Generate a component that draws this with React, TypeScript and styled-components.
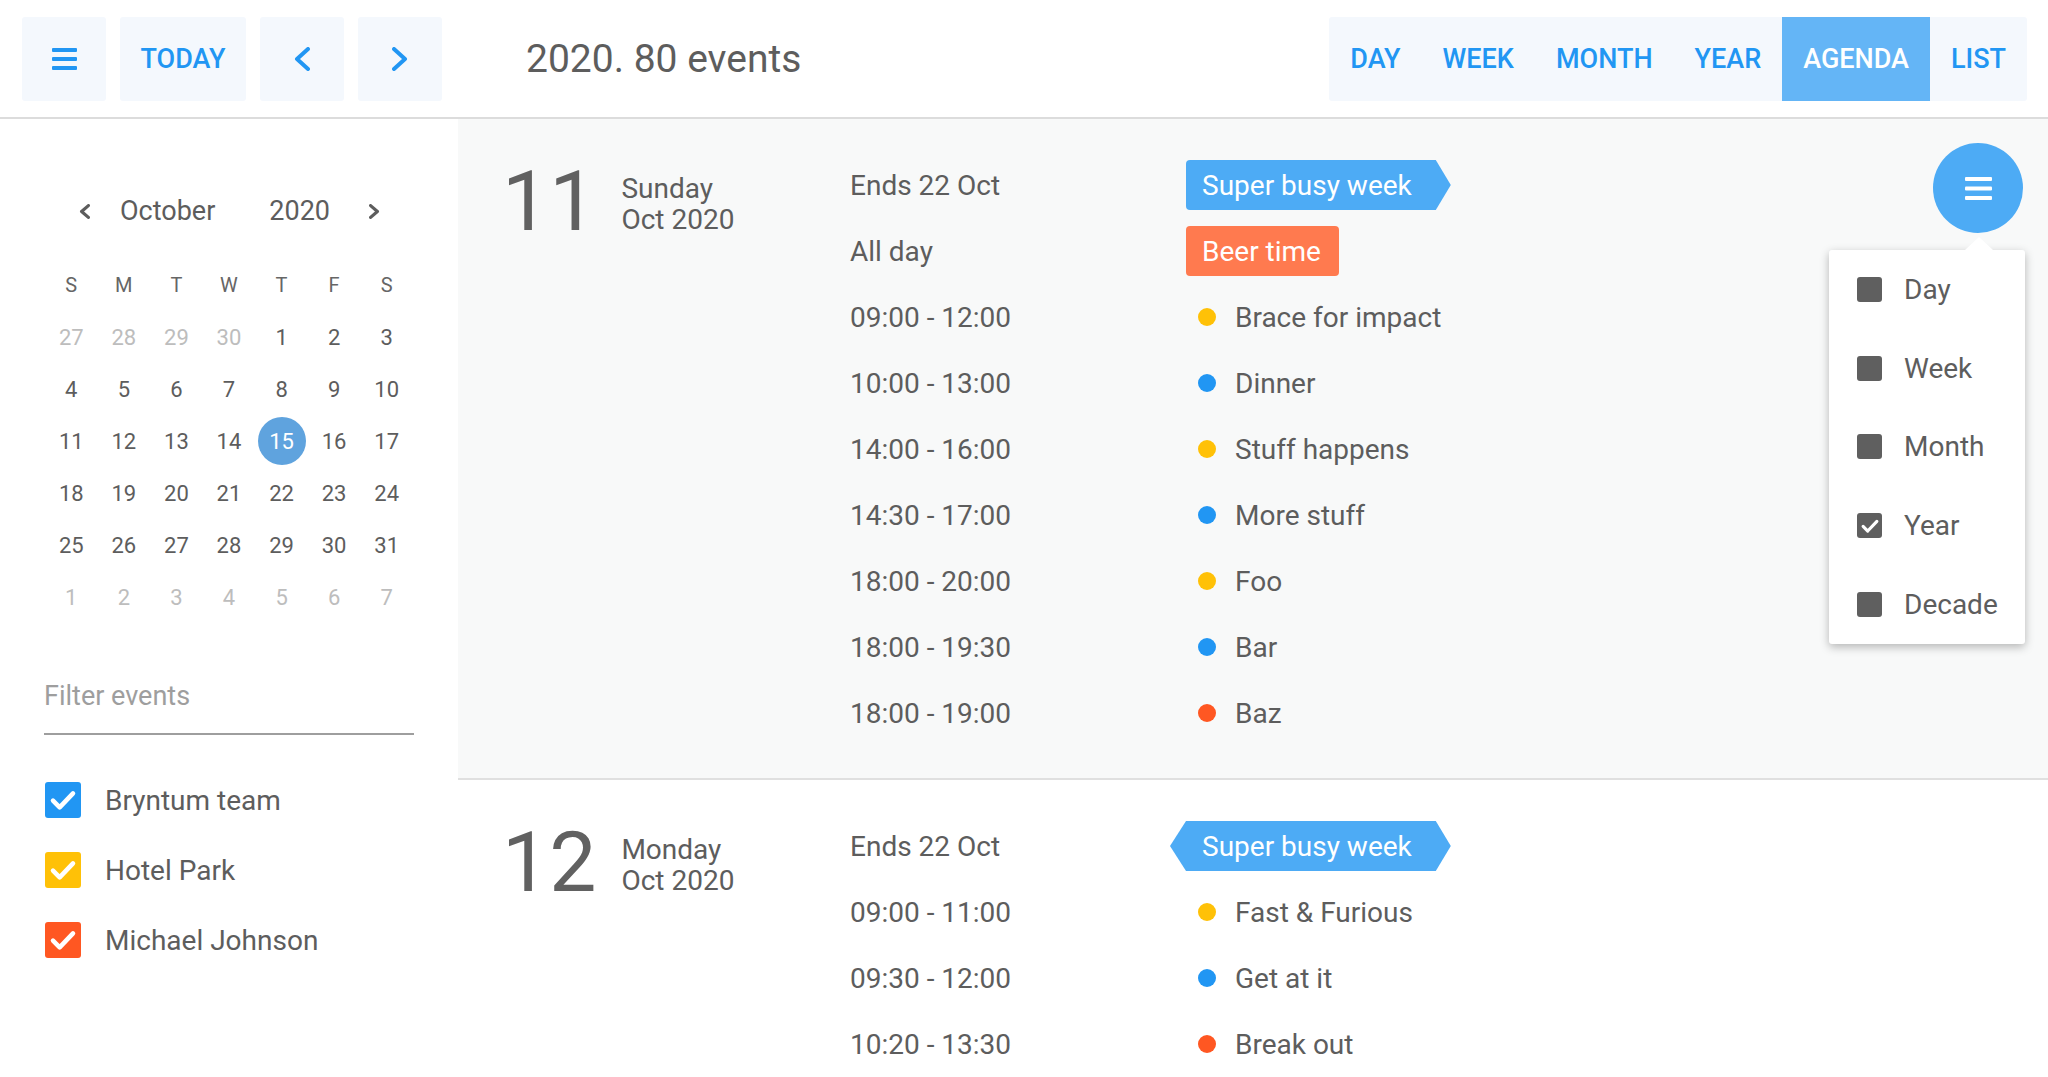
import React from "react";
import styled, { createGlobalStyle } from "styled-components";

const Global = createGlobalStyle`
  html, body { margin: 0; padding: 0; background: #ffffff; }
  body { font-family: Roboto, "Noto Sans", Arial, sans-serif; color: #5d5d5d; overflow: hidden; }
  * { box-sizing: border-box; }
`;

const BLUE = "#2196f3";
const YELLOW = "#ffc107";
const ORANGE = "#ff5722";
const TEXT = "#5d5d5d";

const Page = styled.div`
  width: 2048px;
  height: 1077px;
  display: flex;
  flex-direction: column;
  overflow: hidden;
`;

const Toolbar = styled.header`
  height: 119px;
  flex: none;
  display: flex;
  align-items: center;
  padding: 0 21px 0 22px;
  border-bottom: 2px solid #dcdcdc;
  background: #fff;
`;

const ToolButton = styled.button<{ $w?: number }>`
  height: 84px;
  min-width: ${(p) => p.$w ?? 84}px;
  padding: 0 19px;
  margin-right: 14px;
  border: none;
  border-radius: 3px;
  background: #f4f8fd;
  color: ${BLUE};
  font-family: Roboto, sans-serif;
  font-size: 27px;
  font-weight: 500;
  display: flex;
  align-items: center;
  justify-content: center;
`;

const Title = styled.h1`
  margin: 0 0 0 70px;
  font-size: 39px;
  font-weight: 400;
  color: ${TEXT};
  flex: 1;
  letter-spacing: 0;
`;

const ViewGroup = styled.div`
  display: flex;
  height: 84px;
  background: #f4f8fd;
  border-radius: 3px;
  overflow: hidden;
`;

const ViewButton = styled.button<{ $active?: boolean }>`
  height: 84px;
  padding: 0 21px;
  border: none;
  background: ${(p) => (p.$active ? "#64b5f6" : "transparent")};
  color: ${(p) => (p.$active ? "#fff" : BLUE)};
  font-family: Roboto, sans-serif;
  font-size: 27px;
  font-weight: 500;
`;

const Body = styled.div`
  flex: 1;
  display: flex;
  min-height: 0;
`;

const Sidebar = styled.aside`
  width: 458px;
  flex: none;
  background: #fff;
  padding-top: 66px;
`;

const CalHeader = styled.div`
  height: 52px;
  display: flex;
  align-items: center;
  padding-left: 72px;
  font-size: 27px;
  color: ${TEXT};
`;

const SmallChevron = styled.span`
  width: 24px;
  height: 24px;
  display: flex;
  align-items: center;
  justify-content: center;
`;

const MonthLabel = styled.span`
  margin-left: 24px;
`;

const YearLabel = styled.span`
  margin-left: 54px;
  margin-right: 32px;
`;

const CalGrid = styled.div`
  margin: 22px 0 0 45px;
  width: 368px;
  display: grid;
  grid-template-columns: repeat(7, 1fr);
  grid-auto-rows: 52px;
`;

const DayName = styled.div`
  display: flex;
  align-items: center;
  justify-content: center;
  font-size: 20px;
  color: #666;
`;

const DateCell = styled.div<{ $muted?: boolean; $today?: boolean }>`
  display: flex;
  align-items: center;
  justify-content: center;
  font-size: 22px;
  color: ${(p) => (p.$muted ? "#bdbdbd" : p.$today ? "#fff" : TEXT)};
  & > span {
    width: 48px;
    height: 48px;
    border-radius: 50%;
    display: flex;
    align-items: center;
    justify-content: center;
    background: ${(p) => (p.$today ? "#5fa3de" : "transparent")};
  }
`;

const FilterField = styled.div`
  margin: 55px 0 0 44px;
  width: 370px;
  padding-bottom: 19px;
  border-bottom: 2px solid #9e9e9e;
  font-size: 27px;
  line-height: 36px;
  color: #9e9e9e;
`;

const ResourceList = styled.div`
  margin: 30px 0 0 45px;
  display: flex;
  flex-direction: column;
`;

const ResourceRow = styled.label`
  height: 70px;
  display: flex;
  align-items: center;
  gap: 24px;
  font-size: 28px;
  color: ${TEXT};
`;

const ColorBox = styled.span<{ $color: string }>`
  width: 36px;
  height: 36px;
  border-radius: 3px;
  background: ${(p) => p.$color};
  display: flex;
  align-items: center;
  justify-content: center;
`;

const Agenda = styled.main`
  flex: 1;
  position: relative;
  overflow: hidden;
  background: #fff;
`;

const DaySection = styled.section<{ $shade?: boolean }>`
  display: flex;
  padding: 33px 0 32px;
  background: ${(p) => (p.$shade ? "#f8f9f9" : "#fff")};
  border-bottom: 2px solid #e0e0e0;
`;

const DateBlock = styled.div`
  width: 392px;
  flex: none;
  display: flex;
  align-items: flex-start;
  padding-left: 44px;
`;

const BigNumber = styled.div`
  font-size: 84px;
  line-height: 84px;
  margin-top: 8px;
  color: #616161;
  font-weight: 400;
`;

const DateText = styled.div`
  margin: 21px 0 0 25px;
  font-size: 28px;
  line-height: 31px;
  color: ${TEXT};
`;

const EventList = styled.div`
  flex: 1;
  display: flex;
  flex-direction: column;
`;

const EventRow = styled.div`
  height: 66px;
  display: grid;
  grid-template-columns: 336px 1fr;
  align-items: center;
  font-size: 28px;
  color: ${TEXT};
`;

const TimeText = styled.div``;

const EventCell = styled.div`
  display: flex;
  align-items: center;
`;

const Pill = styled.div<{ $color: string; $arrowRight?: boolean; $arrowLeft?: boolean }>`
  height: 50px;
  display: flex;
  align-items: center;
  background: ${(p) => p.$color};
  color: #fff;
  border-radius: 4px;
  padding: 0 ${(p) => (p.$arrowRight ? 39 : 18)}px 0 ${(p) => (p.$arrowLeft ? 32 : 16)}px;
  margin-left: ${(p) => (p.$arrowLeft ? -16 : 0)}px;
  clip-path: ${(p) =>
    p.$arrowRight && p.$arrowLeft
      ? "polygon(16px 0, calc(100% - 15px) 0, 100% 50%, calc(100% - 15px) 100%, 16px 100%, 0 50%)"
      : p.$arrowRight
      ? "polygon(0 0, calc(100% - 15px) 0, 100% 50%, calc(100% - 15px) 100%, 0 100%)"
      : "none"};
`;

const Dot = styled.span<{ $color: string }>`
  width: 18px;
  height: 18px;
  border-radius: 50%;
  background: ${(p) => p.$color};
  margin: 0 19px 0 12px;
  flex: none;
`;

const Fab = styled.button`
  position: absolute;
  top: 24px;
  right: 25px;
  width: 90px;
  height: 90px;
  border-radius: 50%;
  border: none;
  background: #4dabf5;
  display: flex;
  align-items: center;
  justify-content: center;
  z-index: 2;
`;

const Popup = styled.div`
  position: absolute;
  top: 131px;
  right: 23px;
  width: 196px;
  background: #fff;
  border-radius: 3px;
  box-shadow: 0 3px 10px rgba(0, 0, 0, 0.28);
  z-index: 3;
  &::before {
    content: "";
    position: absolute;
    top: -13px;
    right: 32px;
    width: 0;
    height: 0;
    border-left: 14px solid transparent;
    border-right: 14px solid transparent;
    border-bottom: 13px solid #fff;
  }
`;

const MenuItem = styled.div`
  height: 78.8px;
  display: flex;
  align-items: center;
  padding-left: 28px;
  gap: 22px;
  font-size: 28px;
  color: ${TEXT};
`;

const MenuBox = styled.span`
  width: 25px;
  height: 25px;
  border-radius: 3px;
  background: #5f5f5f;
  display: flex;
  align-items: center;
  justify-content: center;
`;

const Hamburger = ({ color, w, gap, bar }: { color: string; w: number; gap: number; bar: number }) => (
  <svg width={w} height={bar * 3 + gap * 2} viewBox={`0 0 ${w} ${bar * 3 + gap * 2}`}>
    {[0, 1, 2].map((i) => (
      <rect key={i} x={0} y={i * (bar + gap)} width={w} height={bar} rx={1} fill={color} />
    ))}
  </svg>
);

const Chevron = ({ dir, color, w, h, sw }: { dir: "l" | "r"; color: string; w: number; h: number; sw: number }) => {
  const pts = dir === "l" ? `${w - sw / 2},${sw / 2} ${sw / 2 + 1},${h / 2} ${w - sw / 2},${h - sw / 2}` : `${sw / 2},${sw / 2} ${w - sw / 2 - 1},${h / 2} ${sw / 2},${h - sw / 2}`;
  return (
    <svg width={w} height={h} viewBox={`0 0 ${w} ${h}`}>
      <polyline points={pts} fill="none" stroke={color} strokeWidth={sw} strokeLinecap="round" strokeLinejoin="round" />
    </svg>
  );
};

const Check = ({ size, sw }: { size: number; sw: number }) => (
  <svg width={size} height={size} viewBox="0 0 24 24">
    <polyline points="4.5,12.5 9.5,17.5 19.5,7" fill="none" stroke="#fff" strokeWidth={sw} strokeLinecap="round" strokeLinejoin="round" />
  </svg>
);

type Ev =
  | { time: string; kind: "pill"; name: string; color: string; right?: boolean; left?: boolean }
  | { time: string; kind: "dot"; name: string; color: string };

const day11: Ev[] = [
  { time: "Ends 22 Oct", kind: "pill", name: "Super busy week", color: "#4dabf5", right: true },
  { time: "All day", kind: "pill", name: "Beer time", color: "#ff7a4f" },
  { time: "09:00 - 12:00", kind: "dot", name: "Brace for impact", color: YELLOW },
  { time: "10:00 - 13:00", kind: "dot", name: "Dinner", color: BLUE },
  { time: "14:00 - 16:00", kind: "dot", name: "Stuff happens", color: YELLOW },
  { time: "14:30 - 17:00", kind: "dot", name: "More stuff", color: BLUE },
  { time: "18:00 - 20:00", kind: "dot", name: "Foo", color: YELLOW },
  { time: "18:00 - 19:30", kind: "dot", name: "Bar", color: BLUE },
  { time: "18:00 - 19:00", kind: "dot", name: "Baz", color: ORANGE },
];

const day12: Ev[] = [
  { time: "Ends 22 Oct", kind: "pill", name: "Super busy week", color: "#4dabf5", right: true, left: true },
  { time: "09:00 - 11:00", kind: "dot", name: "Fast & Furious", color: YELLOW },
  { time: "09:30 - 12:00", kind: "dot", name: "Get at it", color: BLUE },
  { time: "10:20 - 13:30", kind: "dot", name: "Break out", color: ORANGE },
];

const calDays: { d: number; muted?: boolean }[] = [
  ...[27, 28, 29, 30].map((d) => ({ d, muted: true })),
  ...Array.from({ length: 31 }, (_, i) => ({ d: i + 1 })),
  ...[1, 2, 3, 4, 5, 6, 7].map((d) => ({ d, muted: true })),
];

const Section = ({ num, dayName, events, shade }: { num: number; dayName: string; events: Ev[]; shade?: boolean }) => (
  <DaySection $shade={shade}>
    <DateBlock>
      <BigNumber>{num}</BigNumber>
      <DateText>
        {dayName}
        <br />
        Oct 2020
      </DateText>
    </DateBlock>
    <EventList>
      {events.map((e, i) => (
        <EventRow key={i}>
          <TimeText>{e.time}</TimeText>
          <EventCell>
            {e.kind === "pill" ? (
              <Pill $color={e.color} $arrowRight={e.right} $arrowLeft={e.left}>
                {e.name}
              </Pill>
            ) : (
              <>
                <Dot $color={e.color} />
                {e.name}
              </>
            )}
          </EventCell>
        </EventRow>
      ))}
    </EventList>
  </DaySection>
);

export default function App() {
  return (
    <Page>
      <Global />
      <Toolbar>
        <ToolButton>
          <Hamburger color={BLUE} w={25} gap={5} bar={4} />
        </ToolButton>
        <ToolButton $w={126}>TODAY</ToolButton>
        <ToolButton>
          <Chevron dir="l" color={BLUE} w={16} h={24} sw={4} />
        </ToolButton>
        <ToolButton>
          <Chevron dir="r" color={BLUE} w={16} h={24} sw={4} />
        </ToolButton>
        <Title>2020. 80 events</Title>
        <ViewGroup>
          {["DAY", "WEEK", "MONTH", "YEAR", "AGENDA", "LIST"].map((v) => (
            <ViewButton key={v} $active={v === "AGENDA"}>
              {v}
            </ViewButton>
          ))}
        </ViewGroup>
      </Toolbar>
      <Body>
        <Sidebar>
          <CalHeader>
            <SmallChevron>
              <Chevron dir="l" color="#5d5d5d" w={11} h={15} sw={3.2} />
            </SmallChevron>
            <MonthLabel>October</MonthLabel>
            <YearLabel>2020</YearLabel>
            <SmallChevron>
              <Chevron dir="r" color="#5d5d5d" w={11} h={15} sw={3.2} />
            </SmallChevron>
          </CalHeader>
          <CalGrid>
            {["S", "M", "T", "W", "T", "F", "S"].map((n, i) => (
              <DayName key={i}>{n}</DayName>
            ))}
            {calDays.map((c, i) => (
              <DateCell key={i} $muted={c.muted} $today={!c.muted && c.d === 15}>
                <span>{c.d}</span>
              </DateCell>
            ))}
          </CalGrid>
          <FilterField>Filter events</FilterField>
          <ResourceList>
            {[
              { name: "Bryntum team", color: BLUE },
              { name: "Hotel Park", color: YELLOW },
              { name: "Michael Johnson", color: ORANGE },
            ].map((r) => (
              <ResourceRow key={r.name}>
                <ColorBox $color={r.color}>
                  <Check size={32} sw={3.4} />
                </ColorBox>
                {r.name}
              </ResourceRow>
            ))}
          </ResourceList>
        </Sidebar>
        <Agenda>
          <Section num={11} dayName="Sunday" events={day11} shade />
          <Section num={12} dayName="Monday" events={day12} />
          <Fab>
            <Hamburger color="#fff" w={27} gap={5.5} bar={4} />
          </Fab>
          <Popup>
            {["Day", "Week", "Month", "Year", "Decade"].map((m) => (
              <MenuItem key={m}>
                <MenuBox>{m === "Year" && <Check size={22} sw={3.4} />}</MenuBox>
                {m}
              </MenuItem>
            ))}
          </Popup>
        </Agenda>
      </Body>
    </Page>
  );
}
